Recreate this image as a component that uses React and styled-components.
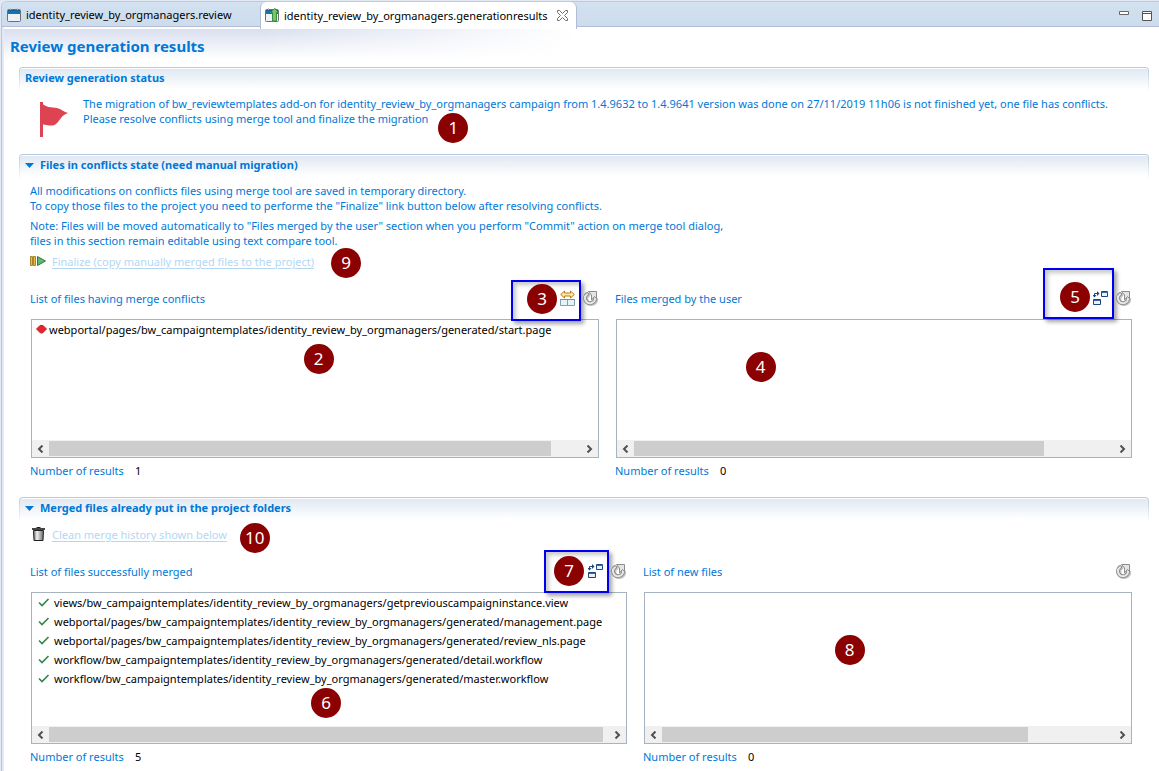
import React from "react";
import styled, { createGlobalStyle } from "styled-components";

const GlobalStyle = createGlobalStyle`
  *, *::before, *::after { box-sizing: border-box; }
  html { background: #e3e8f5; }
  body {
    margin: 0;
    color: #000;
    font-family: "Noto Sans", "Open Sans", sans-serif;
    font-size: 11px;
    line-height: 15px;
  }
  button { font: inherit; color: inherit; border: 0; padding: 0; background: none; }
  ul, p, h1, h2, h3 { margin: 0; padding: 0; }
  svg { display: block; flex: none; }
`;

const BLUE = "#0078d7";

const Editor = styled.div`
  min-height: 100vh;
  padding: 1px 0 0 1px;
  background: #e3e8f5;
`;

const Frame = styled.div`
  min-height: calc(100vh - 1px);
  border-left: 1px solid #bcc3da;
  border-top: 1px solid #c3c9da;
  border-top-left-radius: 6px;
  background: #e3e8f5;
  overflow: hidden;
`;

const TabBar = styled.div`
  display: flex;
  height: 25px;
  background: linear-gradient(#d3e1f0, #cbdcec);
  box-shadow: inset 0 -1px #b4bbd4;
`;

const Tab = styled.button`
  display: flex;
  align-items: center;
  gap: 4px;
  height: ${(p) => (p.$active ? 27 : 25)}px;
  width: ${(p) => (p.$active ? 317 : 258)}px;
  padding: 0 0 ${(p) => (p.$active ? 1 : 0)}px ${(p) => (p.$active ? 4 : 5)}px;
  white-space: nowrap;
  border: solid #b4bbd4;
  border-width: ${(p) => (p.$active ? "0 1px" : "0")};
  border-radius: 6px 6px 0 0;
  background: ${(p) => (p.$active ? "#fff" : "transparent")};
`;

const CloseIcon = styled.svg`
  margin-left: 5px;
`;

const WindowButtons = styled.div`
  display: flex;
  align-items: flex-start;
  gap: 13px;
  margin-left: auto;
  padding: 7px 7px 0 0;
`;

const Form = styled.main`
  margin-left: 2px;
  padding: 9px 10px 8px 6px;
  min-height: calc(100vh - 27px);
  border-top: 2px solid #fff;
  background:
    linear-gradient(to bottom, rgba(255, 255, 255, 0), #fff 30px),
    linear-gradient(to right, #d9dfef 0, #d9dfef 260px, #fff 570px);
`;

const Title = styled.h1`
  height: 29px;
  font-size: 15px;
  line-height: 16px;
  color: ${BLUE};
`;

const Section = styled.section`
  margin-left: 9px;
  padding-bottom: ${(p) => p.$after || 0}px;
`;

const SectionHead = styled.div`
  height: 26px;
  padding: 1px 1px 0;
  border-radius: 4px 4px 0 0;
  background: linear-gradient(#b5cade, #fff);
`;

const SectionHeadInner = styled.div`
  display: flex;
  align-items: flex-start;
  height: 25px;
  padding: 1px 0 0 5px;
  border-top: 1px solid #fff;
  border-radius: 3px 3px 0 0;
  color: ${BLUE};
  background: linear-gradient(#e0e8f2, #fff 20px);
`;

const SectionTitle = styled.h2`
  font-size: 11px;
  line-height: 16px;
  white-space: nowrap;
`;

const Toggle = styled.button`
  display: flex;
  align-items: center;
  gap: 6px;
  font-weight: 700;
`;

const Status = styled.div`
  display: flex;
  gap: 15px;
  padding: 3px 0 0 21px;
  color: ${BLUE};
`;

const FlagIcon = styled.svg`
  margin-top: 6px;
`;

const SectionBody = styled.div`
  padding: 3px 17px 0 11px;
`;

const Note = styled.p`
  margin-bottom: 5px;
  color: ${BLUE};
`;

const ActionRow = styled.div`
  display: flex;
  align-items: center;
  gap: 5px;
  height: 16px;
`;

const DisabledLink = styled.a`
  color: #b3d7f3;
  text-decoration: underline;
  text-underline-offset: 2px;
`;

const Anchor = styled.span`
  position: relative;
`;

const Columns = styled.div`
  display: grid;
  grid-template-columns: ${(p) => p.$cols};
  column-gap: 17px;
  margin-top: 18px;
  padding-left: 1px;
`;

const Column = styled.div`
  min-width: 0;
`;

const ListHead = styled.div`
  display: flex;
  align-items: center;
  justify-content: space-between;
  height: 32px;
  padding-bottom: 9px;
  color: ${BLUE};
`;

const ListTitle = styled.h3`
  font-size: 11px;
  font-weight: 400;
  margin-left: -1px;
`;

const Tools = styled.div`
  display: flex;
  position: relative;
  gap: 7px;
`;

const Tool = styled.button`
  position: relative;
  z-index: 2;
`;

const ListBox = styled.div`
  display: flex;
  position: relative;
  flex-direction: column;
  height: ${(p) => p.$height}px;
  border: 1px solid #a7b3c0;
  background: #fff;
`;

const FileList = styled.ul`
  flex: 1;
  list-style: none;
`;

const File = styled.li`
  display: flex;
  align-items: center;
  gap: ${(p) => p.$gap}px;
  height: 19px;
  padding-left: ${(p) => p.$left}px;
  white-space: nowrap;
`;

const ScrollBar = styled.div`
  display: flex;
  height: 17px;
  background: #f0f0f0;
`;

const Track = styled.div`
  flex: 1;
  padding: 1px 0;
`;

const Thumb = styled.div`
  height: 15px;
  background: #cdcdcd;
`;

const Arrow = styled.button`
  display: grid;
  place-items: center;
  width: 17px;
`;

const Count = styled.p`
  display: flex;
  gap: 10px;
  padding-top: 5px;
  margin-left: -1px;
`;

const CountLabel = styled.span`
  width: 95px;
  color: ${BLUE};
`;

const Badge = styled.span`
  position: absolute;
  z-index: 3;
  left: ${(p) => p.$x};
  top: ${(p) => p.$y}px;
  width: 30px;
  height: 30px;
  border-radius: 50%;
  background: #8b0000;
  color: #fff;
  font-size: 17px;
  line-height: 30px;
  text-align: center;
`;

const Highlight = styled.span`
  position: absolute;
  z-index: 1;
  right: 18px;
  top: ${(p) => p.$top}px;
  width: ${(p) => p.$w}px;
  height: ${(p) => p.$h}px;
  border: 2px solid #0000f0;
  box-shadow: 3px 3px 4px rgba(0, 0, 0, 0.35), inset 3px 3px 4px rgba(0, 0, 0, 0.22);
`;

function DocIcon({ arrow }) {
  return (
    <svg width="15" height="16" viewBox="0 0 15 16" aria-hidden="true">
      <rect x=".5" y="2.5" width="13" height="12" rx="1" fill="#eef2f4" stroke="#6d6f73" />
      <path d="M1 3h12v4H1z" fill="#0878b8" />
      <path d="M1 3h12v1H1z" fill="#1c5f8c" />
      <path d="M3.500 1v2M10.500 1v2" stroke="#b9bfc5" />
      {arrow && (
        <path d="M9.500 1.500 13.500 5.500H11.500V14H7.500V5.500H5.500z" fill="#7ac26f" stroke="#3b8f43" />
      )}
    </svg>
  );
}

function Flag() {
  return (
    <FlagIcon width="28" height="35" viewBox="0 0 28 35" aria-hidden="true">
      <path d="M0 0h3v35H0z" fill="#de4352" />
      <path d="M1 0C5 6 12 5 17 6c4 1 7 4 11 5-7 2-8 8-12 11-4 3-9 1-15 0z" fill="#de4352" />
    </FlagIcon>
  );
}

function TwistIcon() {
  return (
    <svg width="9" height="5" viewBox="0 0 9 5" aria-hidden="true">
      <path d="M0 0h9L4.500 5z" fill={BLUE} />
    </svg>
  );
}

function FinalizeIcon() {
  return (
    <svg width="17" height="12" viewBox="0 0 17 12" aria-hidden="true">
      <path d="M.5 1.500h2v9h-2zM3.500 1.500h2v9h-2z" fill="#e8c048" stroke="#a9842a" />
      <path d="M7.500 1.500 15.500 6 7.500 10.500z" fill="#61b872" stroke="#2c7b42" />
    </svg>
  );
}

function TrashIcon() {
  return (
    <svg width="17" height="16" viewBox="0 0 17 16" aria-hidden="true">
      <defs>
        <linearGradient id="can">
          <stop offset="0" stopColor="#666" />
          <stop offset=".35" stopColor="#f2f2f2" />
          <stop offset="1" stopColor="#666" />
        </linearGradient>
      </defs>
      <path d="M3.500 4.500h10l-.5 10h-9z" fill="url(#can)" stroke="#222" />
      <path d="M6.500 1.500h4" stroke="#222" />
      <path d="M2 3h13" stroke="#444" strokeWidth="2" />
    </svg>
  );
}

function CompareIcon() {
  return (
    <svg width="16" height="17" viewBox="0 0 16 17" aria-hidden="true">
      <path d="M.7 4.500 4.500 1v2h6V1l3.800 3.500L10.500 8V6h-6v2z" fill="#ffe9a8" stroke="#b87c1c" />
      <path d="M.5 9.500h14v6H.5zM7.500 9.500v6" fill="#e3f3f8" stroke="#84a0ae" />
      <path d="M0 9.500h15" stroke="#9f8a58" />
    </svg>
  );
}

function MergeIcon() {
  return (
    <svg width="16" height="17" viewBox="0 0 16 17" aria-hidden="true">
      <path d="M8.500 1.500h6v5h-6z" fill="#e6f1fb" stroke="#1d467f" />
      <path d="M9 2.500h6" stroke="#3c6aa5" />
      <path d="M.5 9.500h7v5h-7z" fill="#e6f1fb" stroke="#1d467f" />
      <path d="M1 10.500h6" stroke="#3c6aa5" />
      <path d="M1.500 5V3.500H5" fill="none" stroke="#1d467f" />
      <path d="M4 1 6.500 3.500 4 6zM-.500 5h4L1.500 7.500z" fill="#1d467f" />
    </svg>
  );
}

function RefreshIcon() {
  return (
    <svg width="16" height="17" viewBox="0 0 16 17" aria-hidden="true">
      <path
        d="M4.500 3.800A5 5 0 1 0 12.200 8.500"
        fill="none"
        stroke="#c4c4c4"
        strokeWidth="4"
        strokeLinecap="round"
        transform="translate(1 1)"
      />
      <path d="M4 4.200A5 5 0 1 0 12 7.500" fill="none" stroke="#8d8d8d" strokeWidth="4" strokeLinecap="round" />
      <path d="M4 4.200A5 5 0 1 0 12 7.500" fill="none" stroke="#e6e6e6" strokeWidth="2" strokeLinecap="round" />
      <path d="M5.500 1.500h8v7L11.500 6.500 8.500 10V5z" fill="#e4e4e4" stroke="#8d8d8d" />
    </svg>
  );
}

function CheckIcon() {
  return (
    <svg width="12" height="10" viewBox="0 0 12 10" aria-hidden="true">
      <path d="M1 4.500 4 7.500 10.500 1" fill="none" stroke="#2f8747" strokeWidth="1.600" />
    </svg>
  );
}

function ConflictIcon() {
  return (
    <svg width="11" height="11" viewBox="0 0 11 11" aria-hidden="true">
      <path d="M4 1.500h3L10.500 5 6.500 9h-2L.5 5z" fill="#e5252e" stroke="#c5222b" />
    </svg>
  );
}

function ScrollArrow({ label, d }) {
  return (
    <Arrow aria-label={label}>
      <svg width="7" height="8" viewBox="0 0 7 8" aria-hidden="true">
        <path d={d} fill="none" stroke="#505050" strokeWidth="2" />
      </svg>
    </Arrow>
  );
}

function FileBox({ height, files = [], icon, left, gap, thumb, children }) {
  return (
    <ListBox $height={height}>
      <FileList>
        {files.map((name) => (
          <File key={name} $left={left} $gap={gap}>
            {icon}
            {name}
          </File>
        ))}
      </FileList>
      <ScrollBar>
        <ScrollArrow label="Scroll left" d="M5.500 .5 2 4 5.500 7.500" />
        <Track>
          <Thumb style={{ width: `${thumb}%` }} />
        </Track>
        <ScrollArrow label="Scroll right" d="M1.500 .5 5 4 1.500 7.500" />
      </ScrollBar>
      {children}
    </ListBox>
  );
}

function Panel({ title, tools, count, children }) {
  return (
    <Column>
      <ListHead>
        <ListTitle>{title}</ListTitle>
        <Tools>
          {tools}
          <Tool aria-label="Refresh">
            <RefreshIcon />
          </Tool>
        </Tools>
      </ListHead>
      {children}
      <Count>
        <CountLabel>Number of results</CountLabel>
        <span>{count}</span>
      </Count>
    </Column>
  );
}

function SectionBar({ title, foldable }) {
  return (
    <SectionHead>
      <SectionHeadInner>
        <SectionTitle>
          {foldable ? (
            <Toggle aria-expanded="true">
              <TwistIcon />
              {title}
            </Toggle>
          ) : (
            title
          )}
        </SectionTitle>
      </SectionHeadInner>
    </SectionHead>
  );
}

const mergedFiles = [
  "views/bw_campaigntemplates/identity_review_by_orgmanagers/getpreviouscampaigninstance.view",
  "webportal/pages/bw_campaigntemplates/identity_review_by_orgmanagers/generated/management.page",
  "webportal/pages/bw_campaigntemplates/identity_review_by_orgmanagers/generated/review_nls.page",
  "workflow/bw_campaigntemplates/identity_review_by_orgmanagers/generated/detail.workflow",
  "workflow/bw_campaigntemplates/identity_review_by_orgmanagers/generated/master.workflow",
];

export default function App() {
  return (
    <Editor>
      <GlobalStyle />
      <Frame>
        <TabBar>
          <Tab>
            <DocIcon />
            identity_review_by_orgmanagers.review
          </Tab>
          <Tab $active>
            <DocIcon arrow />
            identity_review_by_orgmanagers.generationresults
            <CloseIcon width="11" height="11" viewBox="0 0 11 11" aria-hidden="true">
              <path
                d="M.5.5h2l3 3 3-3h2v2l-3 3 3 3v2h-2l-3-3-3 3h-2v-2l3-3-3-3z"
                fill="#fff"
                stroke="#6e6e6e"
              />
            </CloseIcon>
          </Tab>
          <WindowButtons>
            <button aria-label="Minimize">
              <svg width="10" height="10" viewBox="0 0 10 10">
                <path d="M.5 2.500h9v3h-9z" fill="#fff" stroke="#666" />
              </svg>
            </button>
            <button aria-label="Maximize">
              <svg width="10" height="12" viewBox="0 0 10 12">
                <path d="M.5 2.500h9v9h-9zM.5 4.500h9" fill="#fff" stroke="#555" />
              </svg>
            </button>
          </WindowButtons>
        </TabBar>

        <Form>
          <Title>Review generation results</Title>

          <Section $after={17}>
            <SectionBar title="Review generation status" />
            <Status>
              <Flag />
              <p>
                The migration of bw_reviewtemplates add-on for identity_review_by_orgmanagers campaign
                from 1.4.9632 to 1.4.9641 version was done on 27/11/2019 11h06 is not finished yet, one
                file has conflicts.
                <br />
                <Anchor>
                  Please resolve conflicts using merge tool and finalize the migration
                  <Badge $x="calc(100% + 10px)" $y={2}>1</Badge>
                </Anchor>
              </p>
            </Status>
          </Section>

          <Section $after={19}>
            <SectionBar title="Files in conflicts state (need manual migration)" foldable />
            <SectionBody>
              <Note>
                All modifications on conflicts files using merge tool are saved in temporary directory.
                <br />
                To copy those files to the project you need to performe the "Finalize" link button below
                after resolving conflicts.
              </Note>
              <Note>
                Note: Files will be moved automatically to "Files merged by the user" section when you
                perform "Commit" action on merge tool dialog,
                <br />
                files in this section remain editable using text compare tool.
              </Note>
              <ActionRow>
                <FinalizeIcon />
                <Anchor>
                  <DisabledLink href="#finalize">
                    Finalize (copy manually merged files to the project)
                  </DisabledLink>
                  <Badge $x="calc(100% + 17px)" $y={-6}>9</Badge>
                </Anchor>
              </ActionRow>

              <Columns $cols="568fr 516fr">
                <Panel
                  title="List of files having merge conflicts"
                  count={1}
                  tools={
                    <>
                      <Tool aria-label="Compare">
                        <CompareIcon />
                      </Tool>
                      <Highlight $top={-10} $w={70} $h={41} />
                      <Badge $x="-33px" $y={-6}>3</Badge>
                    </>
                  }
                >
                  <FileBox
                    height={139}
                    files={[
                      "webportal/pages/bw_campaigntemplates/identity_review_by_orgmanagers/generated/start.page",
                    ]}
                    icon={<ConflictIcon />}
                    left={4}
                    gap={2}
                    thumb={94.4}
                  >
                    <Badge $x="48%" $y={24}>2</Badge>
                  </FileBox>
                </Panel>
                <Panel
                  title="Files merged by the user"
                  count={0}
                  tools={
                    <>
                      <Tool aria-label="Merge">
                        <MergeIcon />
                      </Tool>
                      <Highlight $top={-22} $w={71} $h={51} />
                      <Badge $x="-33px" $y={-8}>5</Badge>
                    </>
                  }
                >
                  <FileBox height={139} thumb={85.4}>
                    <Badge $x="25%" $y={32}>4</Badge>
                  </FileBox>
                </Panel>
              </Columns>
            </SectionBody>
          </Section>

          <Section>
            <SectionBar title="Merged files already put in the project folders" foldable />
            <SectionBody>
              <ActionRow>
                <TrashIcon />
                <Anchor>
                  <DisabledLink href="#clean">Clean merge history shown below</DisabledLink>
                  <Badge $x="calc(100% + 13px)" $y={-4}>10</Badge>
                </Anchor>
              </ActionRow>

              <Columns $cols="596fr 488fr">
                <Panel
                  title="List of files successfully merged"
                  count={5}
                  tools={
                    <>
                      <Tool aria-label="Merge">
                        <MergeIcon />
                      </Tool>
                      <Highlight $top={-13} $w={65} $h={43} />
                      <Badge $x="-34px" $y={-7}>7</Badge>
                    </>
                  }
                >
                  <FileBox
                    height={152}
                    files={mergedFiles}
                    icon={<CheckIcon />}
                    left={6}
                    gap={4}
                    thumb={98.9}
                  >
                    <Badge $x="47%" $y={95}>6</Badge>
                  </FileBox>
                </Panel>
                <Panel title="List of new files" count={0}>
                  <FileBox height={152} thumb={81}>
                    <Badge $x="39%" $y={42}>8</Badge>
                  </FileBox>
                </Panel>
              </Columns>
            </SectionBody>
          </Section>
        </Form>
      </Frame>
    </Editor>
  );
}
